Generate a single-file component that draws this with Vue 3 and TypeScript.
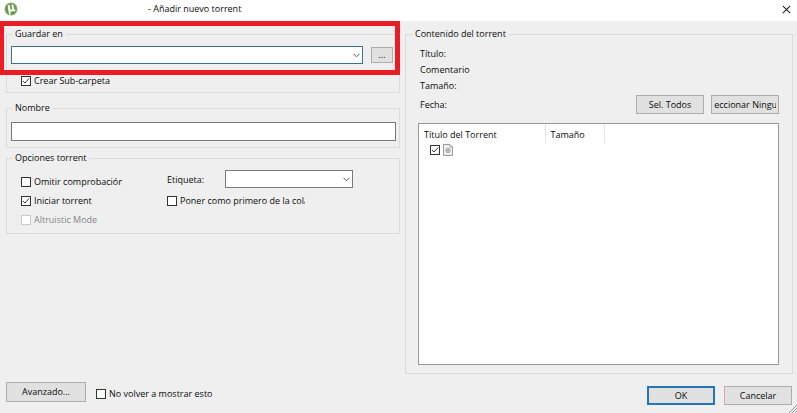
<script setup lang="ts">
import { ref } from 'vue'

const savePath = ref('')
const torrentName = ref('')
const label = ref('')
const createSubfolder = ref(true)
const skipCheck = ref(false)
const startTorrent = ref(true)
const queueFirst = ref(false)
const dontShowAgain = ref(false)
const fileSelected = ref(true)
</script>

<template>
  <div class="dialog">
    <header class="titlebar">
      <svg class="logo" viewBox="0 0 14 14" aria-hidden="true">
        <circle cx="7" cy="7" r="6.600" fill="#a9c99a" />
        <circle cx="7" cy="7" r="5.900" fill="#679b4c" />
        <path d="M3.700 3.200 5.600 2.800l.9 4c.3 1.500 1.900 1.300 1.700-.1L7.400 2.700l1.800-.3.9 4.300c.2 1.100.9 1.300 1.700 1.100l-.9 1.600c-.8.2-1.500-.1-1.800-.6-.8 1-2.200 1.100-2.900.4l.7 3.200-1.500.2c-.7-1.500-1.500-6.500-1.700-9.400z" fill="#fff" />
      </svg>
      <h1>- Añadir nuevo torrent</h1>
      <button class="close" type="button" aria-label="Cerrar">
        <svg viewBox="0 0 9 9" aria-hidden="true"><path d="M.8.8l7.400 7.400M8.200.8L.8 8.200" stroke="#222" stroke-width="1.100" fill="none" /></svg>
      </button>
    </header>

    <main class="body">
      <div class="left">
        <div class="save-area">
          <fieldset class="save">
            <legend>Guardar en</legend>
            <div class="path-row">
              <div class="combo focus">
                <select v-model="savePath" aria-label="Guardar en"><option value=""></option></select>
                <svg viewBox="0 0 7 5" aria-hidden="true"><path d="M.5.8l3 3 3-3" /></svg>
              </div>
              <button class="btn browse" type="button">...</button>
            </div>
            <label class="check"><input v-model="createSubfolder" type="checkbox" /><span>Crear Sub-carpeta</span></label>
          </fieldset>
          <div class="highlight"></div>
        </div>

        <fieldset class="name">
          <legend>Nombre</legend>
          <input v-model="torrentName" class="text" type="text" aria-label="Nombre" />
        </fieldset>

        <fieldset class="options">
          <legend>Opciones torrent</legend>
          <div class="option-grid">
            <div class="option-col">
              <label class="check skip"><input v-model="skipCheck" type="checkbox" /><span>Omitir comprobación</span></label>
              <label class="check"><input v-model="startTorrent" type="checkbox" /><span>Iniciar torrent</span></label>
              <label class="check disabled"><input type="checkbox" disabled /><span>Altruistic Mode</span></label>
            </div>
            <div class="option-col">
              <div class="tag-row">
                <label for="tag">Etiqueta:</label>
                <div class="combo">
                  <select id="tag" v-model="label"><option value=""></option></select>
                  <svg viewBox="0 0 7 5" aria-hidden="true"><path d="M.5.8l3 3 3-3" /></svg>
                </div>
              </div>
              <label class="check queue"><input v-model="queueFirst" type="checkbox" /><span>Poner como primero de la cola</span></label>
            </div>
          </div>
        </fieldset>
      </div>

      <fieldset class="content">
        <legend>Contenido del torrent</legend>
        <div class="meta">
          <p>Título:</p>
          <p>Comentario</p>
          <p>Tamaño:</p>
        </div>
        <div class="date-row">
          <p>Fecha:</p>
          <button class="btn" type="button"><span>Sel. Todos</span></button>
          <button class="btn" type="button"><span>Seleccionar Ninguno</span></button>
        </div>
        <div class="list">
          <table>
            <thead>
              <tr><th class="c-title">Título del Torrent</th><th class="c-size">Tamaño</th><th></th></tr>
            </thead>
            <tbody>
              <tr>
                <td>
                  <div class="file">
                    <input v-model="fileSelected" type="checkbox" aria-label="Incluir archivo" />
                    <svg viewBox="0 0 10 12" aria-hidden="true">
                      <path d="M.5.5h6.500l2.500 2.500v8.500h-9z" fill="#f4f4f4" stroke="#999" />
                      <path d="M7 .5v2.500h2.500" fill="none" stroke="#aaa" />
                      <circle cx="5" cy="6.500" r="2.300" fill="#ccc" stroke="#999" stroke-width=".8" />
                      <circle cx="5" cy="6.500" r=".8" fill="#888" />
                    </svg>
                  </div>
                </td>
                <td></td>
                <td></td>
              </tr>
            </tbody>
          </table>
        </div>
      </fieldset>
    </main>

    <footer class="footer">
      <button class="btn advanced" type="button">Avanzado...</button>
      <label class="check again"><input v-model="dontShowAgain" type="checkbox" /><span>No volver a mostrar esto</span></label>
      <div class="actions">
        <button class="btn ok" type="button">OK</button>
        <button class="btn cancel" type="button">Cancelar</button>
      </div>
      <svg class="grip" viewBox="0 0 8 8" aria-hidden="true"><path d="M0 8l8-8M3 8l5-5M6 8l2-2" stroke="#999" fill="none" /></svg>
    </footer>
  </div>
</template>

<style>
body {
  background: #efefef;
}
</style>

<style scoped>
.dialog,
.dialog * {
  box-sizing: border-box;
}
.dialog {
  display: flex;
  flex-direction: column;
  min-height: 100vh;
  background: #efefef;
  color: #0c0c0c;
  font: 9px/14px "Open Sans", "Noto Sans", sans-serif;
}
button,
input,
select {
  margin: 0;
  font: inherit;
  color: inherit;
}
p {
  margin: 0;
}
.titlebar {
  display: flex;
  align-items: center;
  height: 21px;
  padding: 0 5px 3px 4px;
  background: #fff;
}
.logo {
  width: 14px;
  height: 14px;
}
.titlebar h1 {
  flex: 1;
  margin: 0 0 0 130px;
  font: inherit;
}
.close {
  display: flex;
  padding: 1px;
  border: 0;
  background: none;
}
.close svg {
  width: 9px;
  height: 9px;
}
.body {
  flex: 1;
  display: grid;
  grid-template-columns: 394fr 388fr;
  gap: 5px;
  padding: 6px 4px 0 6px;
}
.left {
  display: flex;
  flex-direction: column;
  min-width: 0;
}
fieldset {
  min-width: 0;
  margin: 0;
  padding: 0 4px;
  border: 1px solid #dcdcdc;
}
legend {
  margin-left: 1px;
  padding: 0 3px;
}
.save-area {
  position: relative;
  margin-bottom: 8px;
}
.highlight {
  position: absolute;
  top: -6px;
  left: -6px;
  right: 0;
  height: 54px;
  border: 5px solid #eb1c24;
  border-left-width: 4px;
  pointer-events: none;
}
.save {
  padding-bottom: 4px;
}
.path-row {
  display: flex;
  align-items: center;
  gap: 8px;
  padding: 5px 2px 0 0;
  margin-bottom: 10px;
}
.combo {
  position: relative;
  height: 18px;
  flex: 1;
}
.combo select {
  display: block;
  width: 100%;
  height: 100%;
  border: 1px solid #7a7a7a;
  border-radius: 0;
  background: #fff;
  appearance: none;
  outline: none;
}
.combo.focus select {
  border-color: #3c7391;
}
.combo svg {
  position: absolute;
  right: 3px;
  top: 7px;
  width: 7px;
  height: 5px;
  fill: none;
  stroke: #555;
  pointer-events: none;
}
.btn {
  display: flex;
  align-items: center;
  justify-content: center;
  width: 68px;
  height: 19px;
  padding: 0 2px;
  overflow: hidden;
  border: 1px solid #adadad;
  background: #e1e1e1;
  white-space: nowrap;
}
.btn span {
  display: flex;
  justify-content: center;
  width: 100%;
  overflow: hidden;
}
.browse {
  width: 22px;
  height: 16px;
}
.check {
  display: flex;
  align-items: center;
  gap: 3px;
  white-space: nowrap;
}
.save .check {
  margin-left: 10px;
}
.check span {
  overflow: hidden;
}
input[type='checkbox'] {
  flex: none;
  width: 10px;
  height: 10px;
  appearance: none;
  border: 1px solid #333;
  background: #fff;
}
input[type='checkbox']:checked {
  background: #fff url("data:image/svg+xml,%3Csvg xmlns='http://www.w3.org/2000/svg' viewBox='0 0 8 8'%3E%3Cpath d='M1 4l2 2 4-4.500' fill='none' stroke='%23333'/%3E%3C/svg%3E");
}
input[type='checkbox']:disabled {
  border-color: #ccc;
}
.disabled {
  color: #858585;
}
.name {
  margin-bottom: 3px;
  padding: 7px 3px 6px 4px;
}
.text {
  display: block;
  width: 100%;
  height: 19px;
  padding: 0 4px;
  border: 1px solid #7a7a7a;
  background: #fff;
}
.options {
  padding-bottom: 6px;
}
.option-grid {
  display: grid;
  grid-template-columns: 146px 1fr;
  padding: 5px 0 0 10px;
}
.option-col {
  display: flex;
  flex-direction: column;
  gap: 5px;
}
.option-col:first-child {
  padding-top: 5px;
}
.skip {
  width: 101px;
}
.queue {
  width: 138px;
  margin-top: 1px;
}
.tag-row {
  display: flex;
  align-items: center;
  height: 18px;
}
.tag-row label {
  width: 58px;
  padding-top: 2px;
}
.tag-row .combo {
  flex: none;
  width: 128px;
}
.content {
  display: flex;
  flex-direction: column;
  padding: 0 13px 8px 12px;
}
.content legend {
  margin-left: -6px;
}
.meta {
  display: grid;
  gap: 2px;
  padding: 6px 2px 0;
}
.date-row {
  display: flex;
  align-items: center;
  gap: 7px;
  margin-top: 2px;
  padding-left: 2px;
}
.date-row p {
  flex: 1;
}
.list {
  flex: 1;
  margin-top: 9px;
  border: 1px solid #989898;
  background: #fff;
}
table {
  width: 100%;
  table-layout: fixed;
  border-collapse: collapse;
}
th {
  height: 19px;
  padding: 2px 5px 0;
  border-right: 1px solid #e5e5e5;
  font-weight: 400;
  text-align: left;
}
th:last-child {
  border-right: 0;
}
.c-title {
  width: 126px;
}
.c-size {
  width: 59px;
}
td {
  padding: 0 0 0 11px;
}
.file {
  display: flex;
  align-items: center;
  gap: 3px;
  height: 14px;
}
.file svg {
  width: 10px;
  height: 12px;
}
.footer {
  position: relative;
  display: flex;
  align-items: flex-start;
  padding: 8px 5px 8px 6px;
}
.advanced {
  width: 80px;
  height: 20px;
}
.again {
  margin: 5px 0 0 10px;
}
.actions {
  display: flex;
  gap: 9px;
  margin: 4px 0 0 auto;
}
.ok {
  border: 2px solid #2675b5;
}
.cancel {
  border-left-color: #e5a5a5;
}
.grip {
  position: absolute;
  right: 0;
  bottom: 0;
  width: 8px;
  height: 8px;
}
</style>
